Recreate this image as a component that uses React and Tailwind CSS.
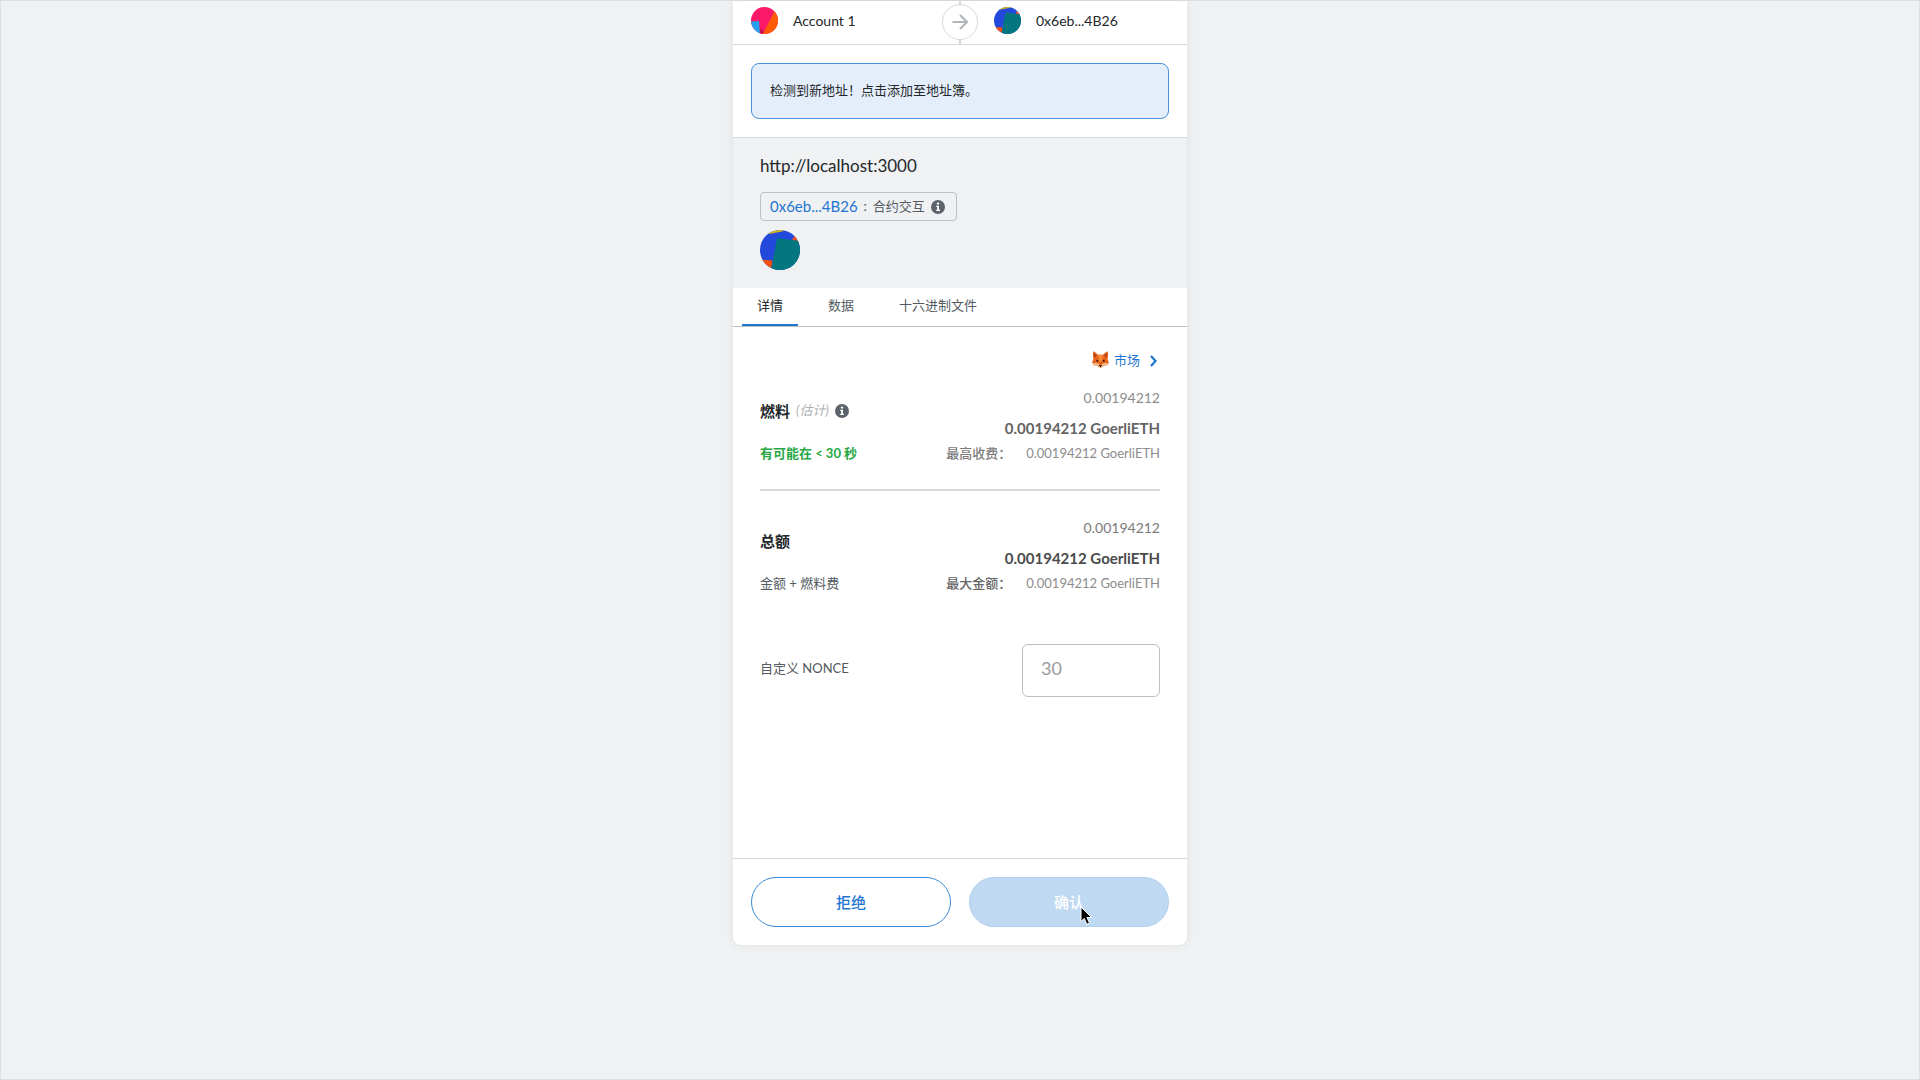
import React, { useState } from 'react';

const tabs = ['详情', '数据', '十六进制文件'];

const fees = [
    {
        id: 'gas',
        title: '燃料',
        hint: '(估计)',
        note: '有可能在 < 30 秒',
        noteClass: 'font-bold text-[#28a745]',
        fiat: '0.00194212',
        amount: '0.00194212 GoerliETH',
        amountClass: 'text-[#646464]',
        fiatClass: 'text-[#8c8c8c]',
        maxLabel: '最高收费：',
        maxClass: 'text-[#7b7b7b]',
        max: '0.00194212 GoerliETH',
    },
    {
        id: 'total',
        title: '总额',
        note: '金额 + 燃料费',
        noteClass: 'text-[#535a61]',
        fiat: '0.00194212',
        amount: '0.00194212 GoerliETH',
        amountClass: 'text-[#4b4b4b]',
        fiatClass: 'text-[#7b7b7b]',
        maxLabel: '最大金额：',
        maxClass: 'text-[#666666]',
        max: '0.00194212 GoerliETH',
    },
];

function AccountAvatar({ className }) {
    return (
        <svg viewBox="0 0 27 27" className={`rounded-full shrink-0 ${className}`} aria-hidden="true">
            <rect width="27" height="27" fill="#fb1868" />
            <path d="M24 3 L12 27 L27 27 L27 3 Z" fill="#fc5a06" />
            <path d="M8 14 L9 27 L12 27 L13 24 L9 21 Z" fill="#c8144e" />
            <path d="M0 14.500 L8 14 L9 27 L0 27 Z" fill="#24a1f0" />
        </svg>
    );
}

function ContractAvatar({ className }) {
    return (
        <svg viewBox="0 0 40 40" className={`rounded-full shrink-0 ${className}`} aria-hidden="true">
            <rect width="40" height="40" fill="#2349dc" />
            <path d="M8 0 L26 0 L22 1.500 L9 4 Z" fill="#d5b51d" />
            <path d="M35 5 L40 9 L40 13 L32 10 Z" fill="#f4511e" />
            <path d="M0 29.500 L12.500 30.500 L11 40 L0 40 Z" fill="#f4500d" />
            <path d="M17 8 L40 11 L40 40 L11 40 Z" fill="#03767f" />
        </svg>
    );
}

function InfoIcon() {
    return (
        <svg viewBox="0 0 14 14" className="w-3.5 h-3.5 shrink-0" aria-hidden="true">
            <circle cx="7" cy="7" r="7" fill="#5d636b" />
            <circle cx="7" cy="3.600" r="1.200" fill="#fff" />
            <path d="M5.200 5.800 H8 V9.800 H9 V10.900 H5.200 V9.800 H6.200 V6.900 H5.200 Z" fill="#fff" />
        </svg>
    );
}

function ArrowIcon() {
    return (
        <svg viewBox="0 0 16 16" className="w-4 h-4" fill="none" stroke="#b3b6b9" strokeWidth="2.200" aria-hidden="true">
            <path d="M0.500 8 H14.500 M8 1 L15 8 L8 15" />
        </svg>
    );
}

function ChevronIcon() {
    return (
        <svg viewBox="0 0 7 12" className="w-[7px] h-3" fill="none" stroke="#1f75d0" strokeWidth="2.200" aria-hidden="true">
            <path d="M1 1 L5.500 6 L1 11" />
        </svg>
    );
}

function FoxIcon() {
    return (
        <svg viewBox="0 0 17 17" className="w-[17px] h-[17px]" aria-hidden="true">
            <path d="M1.200 0.300 Q3.500 0.800 6 3.800 Q8.500 3.200 11 3.800 Q13.500 0.800 15.800 0.300 Q16.600 4 15.600 8 L17 12 L15.500 13 L15.300 14.300 L12 14.600 Q10.500 16.500 8.500 16.800 Q6.500 16.500 5 14.600 L1.700 14.300 L1.500 13 L0 12 L1.400 8 Q0.400 4 1.200 0.300 Z" fill="#e8641b" />
            <path d="M2.200 1.800 L4.800 4.400 L2.300 7 Z M14.800 1.800 L12.200 4.400 L14.700 7 Z" fill="#a8431a" />
            <path d="M6 4 H11 L9.800 10.500 H7.200 Z" fill="#f58a35" />
            <path d="M0.500 12.200 L4.500 12 L7 13 L8.500 16.500 L5 14.600 L1.700 14.300 Z M16.500 12.200 L12.500 12 L10 13 L8.500 16.500 L12 14.600 L15.300 14.300 Z" fill="#edb98d" />
            <circle cx="5.300" cy="9.800" r="1" fill="#2f1d14" />
            <circle cx="11.700" cy="9.800" r="1" fill="#2f1d14" />
            <path d="M7 14 H10 L8.500 16.200 Z" fill="#2f1d14" />
        </svg>
    );
}

function FeeRow({ fee }) {
    return (
        <div className="flex justify-between">
            <div>
                <div className="h-[60px] pb-1 flex items-center gap-[6px]">
                    <h2 className="text-[15px] font-bold text-[#24272a]">{fee.title}</h2>
                    {fee.hint && (
                        <>
                            <em className="text-[13px] text-[#aeb1b5]">{fee.hint}</em>
                            <InfoIcon />
                        </>
                    )}
                </div>
                <p className={`text-[13px] leading-5 ${fee.noteClass}`}>{fee.note}</p>
            </div>
            <div className="text-right">
                <p className={`text-[14px] leading-[30px] ${fee.fiatClass}`}>{fee.fiat}</p>
                <p className={`text-[15px] leading-[30px] font-bold ${fee.amountClass}`}>{fee.amount}</p>
                <p className="flex justify-end gap-[15px] text-[13px] leading-5 text-[#8c8c8c]">
                    <span className={`font-medium ${fee.maxClass}`}>{fee.maxLabel}</span>
                    <span>{fee.max}</span>
                </p>
            </div>
        </div>
    );
}

export default function App() {
    const [activeTab, setActiveTab] = useState(0);
    const [nonce, setNonce] = useState('');

    return (
        <div className="min-h-screen bg-[#eff1f3] border border-[#dddfe1] font-['Lato','Noto_Sans_CJK_SC',sans-serif] text-[#24272a]">
            <main className="w-full max-w-[454px] mx-auto bg-white rounded-b-lg shadow-[0_0_8px_rgba(0,0,0,0.08)]">
                <header className="h-11 border-b border-[#d6d9dc] grid grid-cols-[1fr_36px_1fr]">
                    <div className="flex items-center pl-[18px] pb-1 gap-[15px] text-[14px]">
                        <AccountAvatar className="w-[27px] h-[27px]" />
                        <span>Account 1</span>
                    </div>
                    <div className="flex flex-col items-center">
                        <div className="w-0.5 h-[3px] bg-[#d6d9dc]" />
                        <div className="w-9 h-9 shrink-0 rounded-full border border-[#d6d9dc] flex items-center justify-center">
                            <ArrowIcon />
                        </div>
                        <div className="w-0.5 flex-1 bg-[#d6d9dc]" />
                    </div>
                    <div className="flex items-center pl-4 pb-1 gap-[15px] text-[14px]">
                        <ContractAvatar className="w-[27px] h-[27px]" />
                        <span>0x6eb...4B26</span>
                    </div>
                </header>

                <div className="px-[18px] py-[18px] border-b border-[#d6d9dc]">
                    <button type="button" className="block w-full h-14 px-[18px] text-left text-[13px] rounded-lg border border-[#4a94db] bg-[#e4eefb]">
                        检测到新地址！点击添加至地址簿。
                    </button>
                </div>

                <section className="bg-[#eff1f3] px-[27px] pt-4 pb-[18px]">
                    <p className="text-[17px] leading-6">http://localhost:3000</p>
                    <div className="mt-[14px] w-[197px] h-[29px] pl-[9px] flex items-center gap-[6px] rounded border border-[#bbc0c5] text-[13px] text-[#535a61]">
                        <a href="#contract" className="text-[15px] text-[#1f75d0]">0x6eb...4B26</a>
                        <span>:</span>
                        <span>合约交互</span>
                        <InfoIcon />
                    </div>
                    <ContractAvatar className="mt-[9px] w-10 h-10" />
                </section>

                <div role="tablist" className="flex gap-[15px] px-[9px] border-b border-[#bbc0c5]">
                    {tabs.map((tab, index) => (
                        <button
                            key={tab}
                            type="button"
                            role="tab"
                            aria-selected={index === activeTab}
                            onClick={() => setActiveTab(index)}
                            className={`h-[38px] px-[15px] text-[13px] border-b-2 ${index === activeTab ? 'border-[#1f75d0] text-[#24272a]' : 'border-transparent text-[#535a61]'}`}
                        >
                            {tab}
                        </button>
                    ))}
                </div>

                <section className="px-[27px] pt-5 pb-[161px]">
                    <div className="flex justify-end mb-2 pr-[3px]">
                        <button type="button" className="h-7 flex items-center text-[13px] text-[#1f75d0]">
                            <span className="mr-[5px] pb-1"><FoxIcon /></span>
                            <span className="mr-[10px]">市场</span>
                            <ChevronIcon />
                        </button>
                    </div>
                    <FeeRow fee={fees[0]} />
                    <hr className="mt-[26px] mb-[22px] border-t-2 border-[#d6d9dc]" />
                    <FeeRow fee={fees[1]} />
                    <div className="mt-[51px] flex items-center justify-between">
                        <label htmlFor="nonce" className="pb-1 text-[13px] text-[#535a61]">自定义 NONCE</label>
                        <input
                            id="nonce"
                            type="text"
                            placeholder="30"
                            value={nonce}
                            onChange={(e) => setNonce(e.target.value)}
                            className="w-[138px] h-[53px] px-[18px] pb-1.5 rounded-md border border-[#bbc0c5] text-[18px] placeholder:text-[#9a9a9a]"
                        />
                    </div>
                </section>

                <footer className="border-t border-[#d6d9dc] p-[18px] grid grid-cols-2 gap-[18px]">
                    <button type="button" className="h-[50px] rounded-full border border-[#3b8ad9] text-[15px] font-medium text-[#1f75d0]">
                        拒绝
                    </button>
                    <div className="relative flex">
                        <button type="button" disabled className="flex-1 h-[50px] rounded-full border border-[#b1d0ef] bg-[#c0d9f2] text-[15px] font-medium text-white">
                            确认
                        </button>
                        <svg viewBox="0 0 14 20" className="absolute left-[111px] top-[29px] w-3.5 h-5" aria-hidden="true">
                            <path d="M1 1 V15.500 L4.300 12.500 L6.800 18.300 L9.500 17.100 L7 11.500 H11.500 Z" fill="#000" stroke="#fff" strokeWidth="1" />
                        </svg>
                    </div>
                </footer>
            </main>
        </div>
    );
}
